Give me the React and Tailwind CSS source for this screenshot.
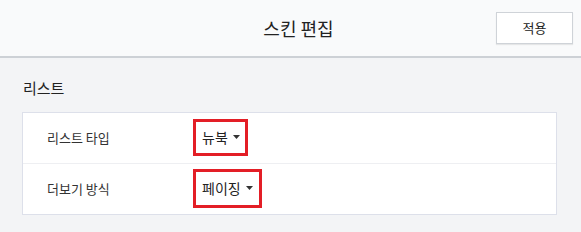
export default function App() {
  const font = { fontFamily: '"Noto Sans CJK KR", "Noto Sans", sans-serif' };
  const Caret = () => (
    <svg width="7" height="4" viewBox="0 0 7 4" className="shrink-0">
      <path d="M0 0 L7 0 L3.5 4 Z" fill="#333" />
    </svg>
  );
  return (
    <div className="w-[581px] h-[232px] bg-[#f3f4f6] overflow-hidden" style={font}>
      <div className="h-[58px] bg-[#f9fafb] border-b-2 border-[#cdd1d6] flex items-center">
        <div className="w-[101px] shrink-0" />
        <div className="flex-1 text-center text-[18px] text-[#222] leading-none">스킨 편집</div>
        <button className="w-[77px] h-[32px] mr-[8px] bg-white border border-[#cfd3d8] shadow-[0_1px_1px_rgba(0,0,0,0.08)] text-[13px] text-[#222] mt-[-1px]">
          적용
        </button>
      </div>
      <div className="pl-[23px] pt-[20px] text-[15px] text-[#222] leading-[20px]">리스트</div>
      <div className="ml-[22px] mr-[24px] mt-[14px] bg-white border border-[#dde0ea]">
        <div className="h-[51px] flex items-center border-b border-[#eeeff2]">
          <div className="w-[170px] pl-[24px] text-[13px] text-[#333]">리스트 타입</div>
          <div className="h-[37px] mt-[-2px] border-[3px] border-[#e31e26] pl-[6px] pr-[5px] flex items-center gap-[5px] text-[14px] text-[#222]">
            <span>뉴북</span>
            <Caret />
          </div>
        </div>
        <div className="h-[50px] flex items-center">
          <div className="w-[170px] pl-[24px] text-[13px] text-[#333]">더보기 방식</div>
          <div className="h-[39px] mt-[-2px] border-[3px] border-[#e31e26] pl-[6px] pr-[6px] flex items-center gap-[5px] text-[14px] text-[#222]">
            <span>페이징</span>
            <Caret />
          </div>
        </div>
      </div>
    </div>
  );
}
